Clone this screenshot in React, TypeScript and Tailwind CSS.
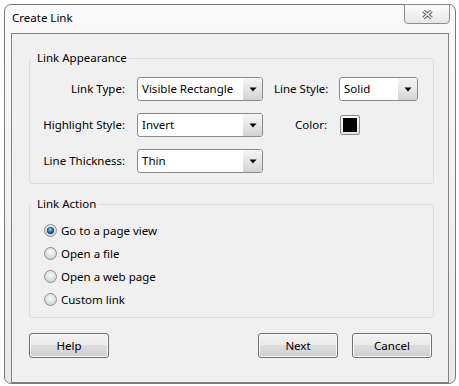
import React from 'react';

function Combo({ value, className }: { value: string; className: string }) {
    return (
        <div className={`flex h-[24px] rounded-[3px] border border-[#8a8a8a] bg-white ${className}`}>
            <div className="flex flex-1 items-center pl-[4px]">{value}</div>
            <div className="flex w-[19px] items-center justify-center rounded-r-[2px] bg-gradient-to-b from-[#f6f6f6] via-[#e6e6e6] to-[#d2d2d2]">
                <svg width="8" height="5" viewBox="0 0 8 5">
                    <path d="M0.5 0.5h7L4 4.5z" fill="#000" />
                </svg>
            </div>
        </div>
    );
}

function Radio({ label, checked, id }: { label: string; checked?: boolean; id: string }) {
    return (
        <div className="flex h-[23px] items-center gap-[4px]">
            <svg width="13" height="13" viewBox="0 0 13 13">
                <defs>
                    <radialGradient id={`ring-${id}`} cx="50%" cy="40%" r="60%">
                        <stop offset="0%" stopColor="#fbfbfb" />
                        <stop offset="100%" stopColor="#cfcfcf" />
                    </radialGradient>
                    <radialGradient id={`dot-${id}`} cx="45%" cy="35%" r="65%">
                        <stop offset="0%" stopColor="#a6dcf7" />
                        <stop offset="55%" stopColor="#1f78b8" />
                        <stop offset="100%" stopColor="#0e3557" />
                    </radialGradient>
                </defs>
                <circle cx="6.5" cy="6.5" r="6" fill={`url(#ring-${id})`} stroke="#8e8f8f" strokeWidth="1" />
                {checked && <circle cx="6.5" cy="6.5" r="3.3" fill={`url(#dot-${id})`} stroke="#17314d" strokeWidth="0.6" />}
            </svg>
            <span>{label}</span>
        </div>
    );
}

function Button({ label }: { label: string }) {
    return (
        <div className="flex h-[25px] w-[80px] items-center justify-center rounded-[3px] border border-[#707070] bg-[linear-gradient(#f2f2f2_0%,#ebebeb_50%,#dddddd_50%,#cfcfcf_100%)] shadow-[inset_0_0_0_1px_#fbfbfb]">
            {label}
        </div>
    );
}

export default function App() {
    return (
        <div className="h-[386px] w-[459px] bg-white pl-[4px] pt-[4px] font-['Segoe_UI','Noto_Sans',sans-serif] text-[11.5px] leading-[16px] text-black">
            <div className="flex h-[380px] w-[452px] flex-col rounded-[7px] border border-[#7a7a7a] bg-gradient-to-b from-[#fafafa] to-[#e9e9e9]">
                {/* title bar */}
                <div className="flex h-[28px] items-start justify-between pl-[7px] pr-[5px]">
                    <span className="pt-[5px]">Create Link</span>
                    <div className="-mt-px flex h-[20px] w-[46px] items-center justify-center rounded-b-[4px] border border-[#8c8c8c] bg-gradient-to-b from-[#fbfbfb] to-[#e8e8e8]">
                        <svg width="13" height="11" viewBox="0 0 13 11">
                            <path d="M2.5 2L10.5 9M10.5 2L2.5 9" stroke="#5e5e5e" strokeWidth="3.6" />
                            <path d="M2.5 2L10.5 9M10.5 2L2.5 9" stroke="#f0f0f0" strokeWidth="1.6" />
                        </svg>
                    </div>
                </div>

                {/* client area */}
                <div className="mx-[6px] flex flex-1 flex-col border border-[#828282] bg-[#f0f0f0] pl-[17px] pr-[14px] pt-[16px]">
                    <fieldset className="h-[134px] rounded-[3px] border border-[#d5dfe5]">
                        <legend className="ml-[1px] pl-[6px] pr-[2px]">Link Appearance</legend>
                        <div className="grid grid-cols-[95px_125px_53px_auto] items-center gap-x-[12px] gap-y-[12px] whitespace-nowrap pt-[11px]">
                            <span className="text-right">Link Type:</span>
                            <Combo value="Visible Rectangle" className="w-[126px]" />
                            <span className="text-right">Line Style:</span>
                            <Combo value="Solid" className="w-[79px]" />

                            <span className="text-right">Highlight Style:</span>
                            <Combo value="Invert" className="w-[126px]" />
                            <span className="text-right">Color:</span>
                            <div className="ml-px flex h-[20px] w-[20px] items-center justify-center rounded-[2px] border border-[#8a8a8a] bg-gradient-to-b from-[#fbfbfb] to-[#e4e4e4]">
                                <div className="h-[14px] w-[14px] bg-black" />
                            </div>

                            <span className="text-right">Line Thickness:</span>
                            <Combo value="Thin" className="w-[126px]" />
                        </div>
                    </fieldset>

                    <fieldset className="mt-[12px] h-[122px] rounded-[3px] border border-[#d5dfe5]">
                        <legend className="ml-[1px] pl-[6px] pr-[2px]">Link Action</legend>
                        <div className="flex flex-col pl-[14px] pt-[7px]">
                            <Radio id="a" label="Go to a page view" checked />
                            <Radio id="b" label="Open a file" />
                            <Radio id="c" label="Open a web page" />
                            <Radio id="d" label="Custom link" />
                        </div>
                    </fieldset>

                    <div className="mt-[15px] flex items-center pr-[2px]">
                        <Button label="Help" />
                        <div className="flex-1" />
                        <div className="flex gap-[14px]">
                            <Button label="Next" />
                            <Button label="Cancel" />
                        </div>
                    </div>
                </div>
            </div>
        </div>
    );
}
